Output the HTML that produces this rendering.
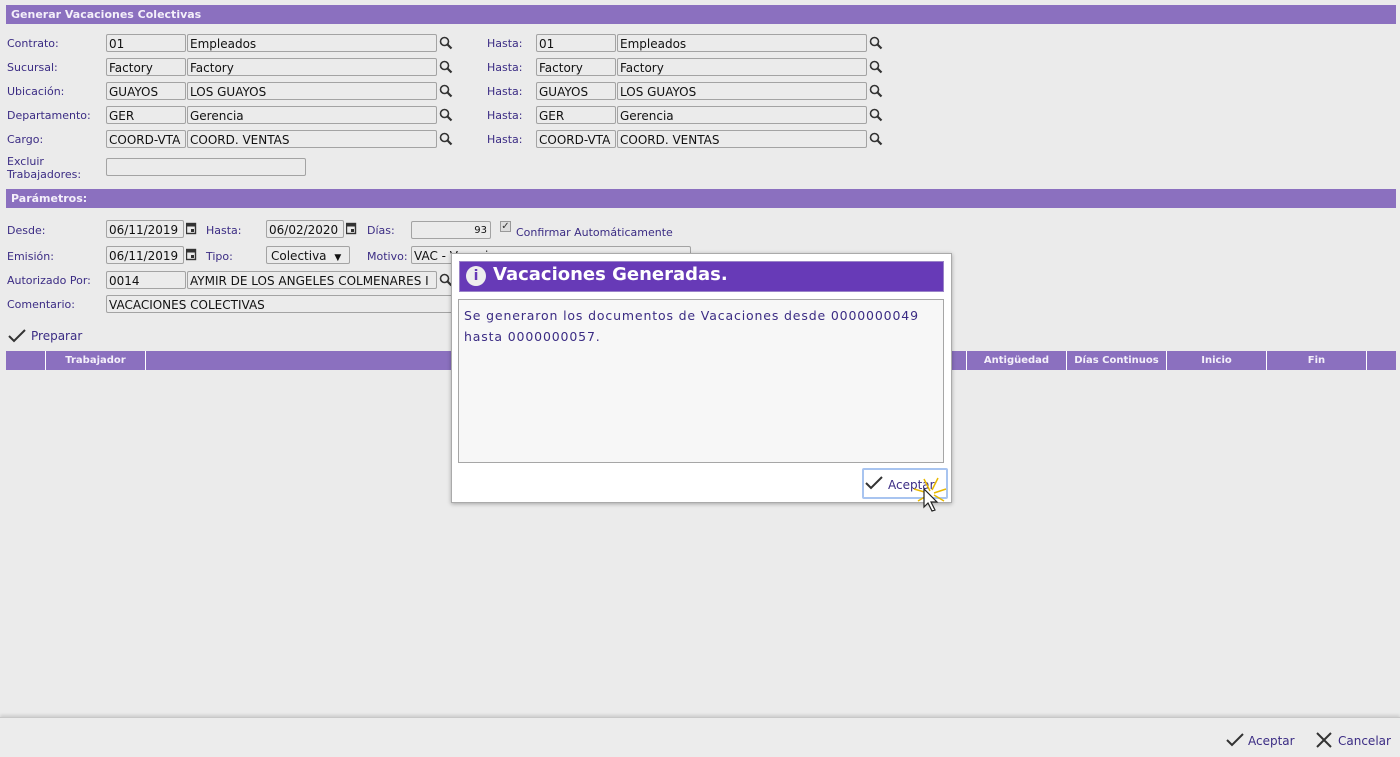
<!DOCTYPE html>
<html><head><meta charset="utf-8"><style>
*{box-sizing:border-box;margin:0;padding:0}
body{width:1400px;height:757px;background:#ebebeb;font-family:"DejaVu Sans","Liberation Sans",sans-serif;position:relative;overflow:hidden}
.a{position:absolute}
.bar{background:#8b70bf;color:#f4f0fa;font-weight:bold;font-size:11px;padding-left:5px;line-height:20px}
.lb{font-size:11px;color:#3b2c84;margin-top:1px}
.in{border:1px solid #a3a3a3;background:#ebebeb;height:18px;font-size:12px;line-height:18px;padding-left:2px;color:#111;white-space:nowrap;overflow:hidden;border-radius:2px}
.th{color:#f4f0fa;font-size:10px;font-weight:bold;text-align:center;line-height:20px;border-left:1px solid #fff;height:19px;top:351px}
</style></head><body>
<div class="a bar" style="left:6px;top:5px;width:1390px;height:19px">Generar Vacaciones Colectivas</div>

<svg width="0" height="0" style="position:absolute"><defs><g id="m"><circle cx="5.5" cy="5.5" r="4" fill="none" stroke="#333" stroke-width="1.6"/><path d="M8.4 8.4L12.5 12.5" stroke="#333" stroke-width="2.2"/></g><g id="c"><rect x="0.5" y="1.5" width="9" height="10" fill="none" stroke="#333" stroke-width="1.4"/><rect x="0.5" y="1.5" width="9" height="3" fill="#333"/><rect x="5" y="7" width="3" height="3" fill="#333"/></g></defs></svg>

<div class="a lb" style="left:7px;top:36px">Contrato:</div>
<div class="a in" style="left:106px;top:34px;width:80px">01</div><div class="a in" style="left:187px;top:34px;width:250px">Empleados</div>
<svg class="a" style="left:439px;top:36px" width="14" height="14"><use href="#m"/></svg>
<div class="a lb" style="left:487px;top:36px">Hasta:</div>
<div class="a in" style="left:536px;top:34px;width:80px">01</div><div class="a in" style="left:617px;top:34px;width:250px">Empleados</div>
<svg class="a" style="left:869px;top:36px" width="14" height="14"><use href="#m"/></svg>

<div class="a lb" style="left:7px;top:60px">Sucursal:</div>
<div class="a in" style="left:106px;top:58px;width:80px">Factory</div><div class="a in" style="left:187px;top:58px;width:250px">Factory</div>
<svg class="a" style="left:439px;top:60px" width="14" height="14"><use href="#m"/></svg>
<div class="a lb" style="left:487px;top:60px">Hasta:</div>
<div class="a in" style="left:536px;top:58px;width:80px">Factory</div><div class="a in" style="left:617px;top:58px;width:250px">Factory</div>
<svg class="a" style="left:869px;top:60px" width="14" height="14"><use href="#m"/></svg>

<div class="a lb" style="left:7px;top:84px">Ubicación:</div>
<div class="a in" style="left:106px;top:82px;width:80px">GUAYOS</div><div class="a in" style="left:187px;top:82px;width:250px">LOS GUAYOS</div>
<svg class="a" style="left:439px;top:84px" width="14" height="14"><use href="#m"/></svg>
<div class="a lb" style="left:487px;top:84px">Hasta:</div>
<div class="a in" style="left:536px;top:82px;width:80px">GUAYOS</div><div class="a in" style="left:617px;top:82px;width:250px">LOS GUAYOS</div>
<svg class="a" style="left:869px;top:84px" width="14" height="14"><use href="#m"/></svg>

<div class="a lb" style="left:7px;top:108px">Departamento:</div>
<div class="a in" style="left:106px;top:106px;width:80px">GER</div><div class="a in" style="left:187px;top:106px;width:250px">Gerencia</div>
<svg class="a" style="left:439px;top:108px" width="14" height="14"><use href="#m"/></svg>
<div class="a lb" style="left:487px;top:108px">Hasta:</div>
<div class="a in" style="left:536px;top:106px;width:80px">GER</div><div class="a in" style="left:617px;top:106px;width:250px">Gerencia</div>
<svg class="a" style="left:869px;top:108px" width="14" height="14"><use href="#m"/></svg>

<div class="a lb" style="left:7px;top:132px">Cargo:</div>
<div class="a in" style="left:106px;top:130px;width:80px">COORD-VTA</div><div class="a in" style="left:187px;top:130px;width:250px">COORD. VENTAS</div>
<svg class="a" style="left:439px;top:132px" width="14" height="14"><use href="#m"/></svg>
<div class="a lb" style="left:487px;top:132px">Hasta:</div>
<div class="a in" style="left:536px;top:130px;width:80px">COORD-VTA</div><div class="a in" style="left:617px;top:130px;width:250px">COORD. VENTAS</div>
<svg class="a" style="left:869px;top:132px" width="14" height="14"><use href="#m"/></svg>

<div class="a lb" style="left:7px;top:154px;line-height:13px">Excluir<br>Trabajadores:</div>
<div class="a in" style="left:106px;top:158px;width:200px"></div>

<div class="a bar" style="left:6px;top:189px;width:1390px;height:19px">Parámetros:</div>

<div class="a lb" style="left:7px;top:223px">Desde:</div>
<div class="a in" style="left:106px;top:220px;width:78px">06/11/2019</div>
<svg class="a" style="left:186px;top:222px" width="11" height="13"><use href="#c"/></svg>
<div class="a lb" style="left:206px;top:223px">Hasta:</div>
<div class="a in" style="left:266px;top:220px;width:78px">06/02/2020</div>
<svg class="a" style="left:346px;top:222px" width="11" height="13"><use href="#c"/></svg>
<div class="a lb" style="left:367px;top:223px">Días:</div>
<div class="a in" style="left:411px;top:221px;width:80px;text-align:right;padding-right:3px;font-size:10px">93</div>
<div class="a" style="left:500px;top:221px;width:11px;height:11px;border:1px solid #999;background:#ddd;font-size:10px;line-height:9px;text-align:center;color:#333">✓</div>
<div class="a lb" style="left:516px;top:225px">Confirmar Automáticamente</div>

<div class="a lb" style="left:7px;top:249px">Emisión:</div>
<div class="a in" style="left:106px;top:246px;width:78px">06/11/2019</div>
<svg class="a" style="left:186px;top:248px" width="11" height="13"><use href="#c"/></svg>
<div class="a lb" style="left:206px;top:249px">Tipo:</div>
<div class="a in" style="left:266px;top:246px;width:84px;padding-left:4px">Colectiva <span style="font-size:9px;margin-left:4px">▼</span></div>
<div class="a lb" style="left:367px;top:249px">Motivo:</div>
<div class="a in" style="left:411px;top:246px;width:280px">VAC - Vacaciones</div>

<div class="a lb" style="left:7px;top:273px">Autorizado Por:</div>
<div class="a in" style="left:106px;top:271px;width:80px">0014</div><div class="a in" style="left:187px;top:271px;width:250px">AYMIR DE LOS ANGELES COLMENARES I</div>
<svg class="a" style="left:439px;top:273px" width="14" height="14"><use href="#m"/></svg>

<div class="a lb" style="left:7px;top:297px">Comentario:</div>
<div class="a in" style="left:106px;top:295px;width:586px">VACACIONES COLECTIVAS</div>

<svg class="a" style="left:8px;top:329px" width="18" height="14"><path d="M1 7l5 5L17 1" fill="none" stroke="#333" stroke-width="2"/></svg>
<div class="a lb" style="left:31px;top:328px;font-size:12px">Preparar</div>

<div class="a" style="left:6px;top:351px;width:1390px;height:19px;background:#8b70bf"></div>
<div class="a th" style="left:45px;width:100px">Trabajador</div>
<div class="a th" style="left:145px;width:821px"></div>
<div class="a th" style="left:966px;width:100px">Antigüedad</div>
<div class="a th" style="left:1066px;width:100px">Días Continuos</div>
<div class="a th" style="left:1166px;width:100px">Inicio</div>
<div class="a th" style="left:1266px;width:100px">Fin</div>
<div class="a th" style="left:1366px;width:30px"></div>

<div class="a" style="left:451px;top:253px;width:501px;height:250px;background:#fff;border:1px solid #aaa;box-shadow:0 1px 4px rgba(0,0,0,.3)"></div>
<div class="a" style="left:459px;top:261px;width:485px;height:31px;background:#673ab7;border:1px solid #9a84c8"></div>
<div class="a" style="left:466px;top:266px;width:20px;height:20px;border-radius:50%;background:#eee;color:#673ab7;font:bold 14px 'DejaVu Sans';text-align:center;line-height:20px">i</div>
<div class="a" style="left:493px;top:263px;color:#fff;font:bold 18px 'DejaVu Sans',sans-serif;line-height:24px">Vacaciones Generadas.</div>
<div class="a" style="left:458px;top:299px;width:486px;height:164px;background:#f7f7f7;border:1px solid #a6a6a6;padding:5px 5px;font-size:12.5px;line-height:21px;color:#3b2c84;letter-spacing:0.85px">Se generaron los documentos de Vacaciones desde 0000000049<br>hasta 0000000057.</div>
<div class="a" style="left:862px;top:468px;width:86px;height:31px;border:2px solid #a8c4f0;border-radius:2px;background:#fff"></div>
<svg class="a" style="left:865px;top:476px" width="18" height="14"><path d="M1 7l5 5L17 1" fill="none" stroke="#333" stroke-width="2"/></svg>
<div class="a lb" style="left:888px;top:477px;font-size:12px">Aceptar</div>
<svg class="a" style="left:910px;top:475px" width="40" height="45"><g stroke="#e8b800" stroke-width="1.5"><path d="M14 4L20 16M28 3L22 15M36 14L24 18M4 14L18 18M8 26L18 20M34 26L24 20"/></g><path d="M14 14v18l4-4 4 8 3-1-4-8h6z" fill="#fff" stroke="#222" stroke-width="1.2"/></svg>

<div class="a" style="left:0;top:717px;width:1400px;height:40px;background:#ececec;border-top:1px solid #c8c8c8;box-shadow:0 -2px 3px rgba(0,0,0,.12)"></div>
<svg class="a" style="left:1226px;top:733px" width="18" height="14"><path d="M1 7l5 5L17 1" fill="none" stroke="#333" stroke-width="2"/></svg>
<div class="a lb" style="left:1248px;top:733px;font-size:12px">Aceptar</div>
<svg class="a" style="left:1316px;top:732px" width="16" height="16"><path d="M1 1L15 15M15 1L1 15" stroke="#333" stroke-width="2"/></svg>
<div class="a lb" style="left:1338px;top:733px;font-size:12px">Cancelar</div>
</body></html>
